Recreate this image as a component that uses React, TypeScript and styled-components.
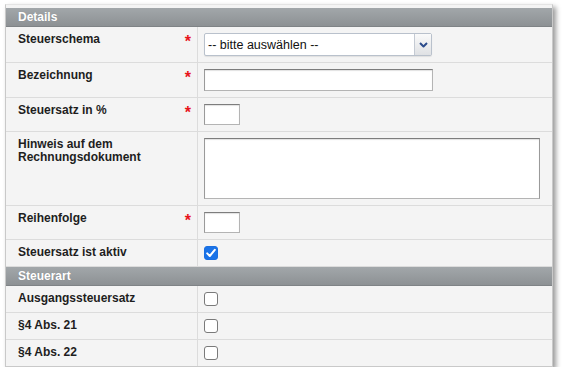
import React from "react";
import styled, { createGlobalStyle } from "styled-components";

const GlobalStyle = createGlobalStyle`
  html, body {
    margin: 0;
    padding: 0;
    background: #ffffff;
  }
  body {
    font-family: "Liberation Sans", Arial, Helvetica, sans-serif;
    font-size: 12px;
    color: #222;
  }
`;

const Page = styled.div`
  padding: 4px 0 0 5px;
`;

const Panel = styled.div`
  width: 546px;
  border: 1px solid #c9c9c9;
  border-top-color: #e4e4e4;
  padding-top: 3px;
  background: #f4f4f4;
  box-shadow: 3px 3px 5px rgba(0, 0, 0, 0.4);
`;

const SectionHeader = styled.div`
  height: 19px;
  padding-left: 12px;
  display: flex;
  align-items: center;
  background: linear-gradient(#a2a7aa, #8d9194);
  border-bottom: 1px solid #7f8386;
  box-sizing: border-box;
  color: #ffffff;
  font-weight: bold;
  font-size: 12px;
  text-shadow: 0 0 1px rgba(0, 0, 0, 0.15);
`;

const Row = styled.div`
  display: grid;
  grid-template-columns: 192px 1fr;
  border-bottom: 1px solid #dcdcdc;
  &:last-child {
    border-bottom: none;
  }
`;

const LabelCell = styled.div`
  display: flex;
  justify-content: space-between;
  align-items: flex-start;
  padding: 6px 6px 6px 12px;
  border-right: 1px solid #dcdcdc;
  font-weight: bold;
  font-size: 12px;
  line-height: 13px;
  color: #1e1e1e;
`;

const Required = styled.span`
  color: #e8141b;
  font-size: 16px;
  font-weight: bold;
  line-height: 14px;
  margin-top: 2px;
`;

const ValueCell = styled.div`
  padding: 6px;
  display: flex;
  align-items: flex-start;
`;

const TextInput = styled.input<{ $w: number; $h: number }>`
  width: ${(p) => p.$w}px;
  height: ${(p) => p.$h}px;
  box-sizing: border-box;
  margin: 0;
  border: 1px solid #b4b4b4;
  border-top-color: #7d7d7d;
  border-left-color: #9a9a9a;
  box-shadow: inset 0 1px 1px rgba(0, 0, 0, 0.12);
  background: #ffffff;
  font-family: inherit;
  font-size: 12px;
`;

const TextArea = styled.textarea`
  width: 336px;
  height: 61px;
  box-sizing: border-box;
  margin: 0;
  resize: none;
  border: 1px solid #b4b4b4;
  border-top-color: #7d7d7d;
  border-left-color: #9a9a9a;
  border-right-color: #9a9a9a;
  box-shadow: inset 0 1px 1px rgba(0, 0, 0, 0.12);
  background: #ffffff;
`;

const SelectBox = styled.div`
  position: relative;
  width: 228px;
  height: 23px;
  box-sizing: border-box;
  border: 1px solid #b9c1cc;
  border-radius: 2px;
  background: #ffffff;
  box-shadow: 0 1px 1px rgba(0, 0, 0, 0.08);
`;

const NativeSelect = styled.select`
  appearance: none;
  -webkit-appearance: none;
  width: 100%;
  height: 100%;
  margin: 0;
  border: none;
  outline: none;
  background: transparent;
  padding: 0 22px 0 3px;
  font-family: "Liberation Sans", Arial, sans-serif;
  font-size: 12.5px;
  color: #111;
`;

const SelectArrow = styled.div`
  position: absolute;
  top: 0;
  right: 0;
  width: 17px;
  height: 100%;
  box-sizing: border-box;
  border-left: 1px solid #c4cad3;
  background: linear-gradient(#fafafa, #dfe1e4);
  display: flex;
  align-items: center;
  justify-content: center;
  pointer-events: none;
`;

const Check = styled.input`
  appearance: none;
  -webkit-appearance: none;
  width: 14px;
  height: 14px;
  margin: 0;
  box-sizing: border-box;
  border: 1px solid #7a7a7a;
  border-radius: 3px;
  background: #ffffff;
  &:checked {
    border-color: #1a6fe0;
    background: #1a73e8
      url("data:image/svg+xml;utf8,<svg xmlns='http://www.w3.org/2000/svg' viewBox='0 0 14 14'><path d='M3.2 7.4 L5.8 10 L10.8 3.8' fill='none' stroke='white' stroke-width='2' stroke-linecap='round' stroke-linejoin='round'/></svg>")
      center / 14px 14px no-repeat;
  }
`;

type FieldProps = {
  label: React.ReactNode;
  required?: boolean;
  children: React.ReactNode;
};

const Field = ({ label, required, children }: FieldProps) => (
  <Row>
    <LabelCell>
      <span>{label}</span>
      {required && <Required>*</Required>}
    </LabelCell>
    <ValueCell>{children}</ValueCell>
  </Row>
);

const Chevron = () => (
  <svg width="9" height="6" viewBox="0 0 9 6">
    <path
      d="M1 1 L4.5 4.5 L8 1"
      fill="none"
      stroke="#2c4c8c"
      strokeWidth="2"
      strokeLinejoin="round"
    />
  </svg>
);

export default function App() {
  return (
    <Page>
      <GlobalStyle />
      <Panel>
        <SectionHeader>Details</SectionHeader>
        <Field label="Steuerschema" required>
          <SelectBox>
            <NativeSelect defaultValue="">
              <option value="">-- bitte auswählen --</option>
            </NativeSelect>
            <SelectArrow>
              <Chevron />
            </SelectArrow>
          </SelectBox>
        </Field>
        <Field label="Bezeichnung" required>
          <TextInput type="text" $w={229} $h={22} />
        </Field>
        <Field label="Steuersatz in %" required>
          <TextInput type="text" $w={36} $h={21} />
        </Field>
        <Field
          label={
            <>
              Hinweis auf dem
              <br />
              Rechnungsdokument
            </>
          }
        >
          <TextArea />
        </Field>
        <Field label="Reihenfolge" required>
          <TextInput type="text" $w={36} $h={21} />
        </Field>
        <Field label="Steuersatz ist aktiv">
          <Check type="checkbox" defaultChecked />
        </Field>

        <SectionHeader>Steuerart</SectionHeader>
        <Field label="Ausgangssteuersatz">
          <Check type="checkbox" />
        </Field>
        <Field label="§4 Abs. 21">
          <Check type="checkbox" />
        </Field>
        <Field label="§4 Abs. 22">
          <Check type="checkbox" />
        </Field>
      </Panel>
    </Page>
  );
}
